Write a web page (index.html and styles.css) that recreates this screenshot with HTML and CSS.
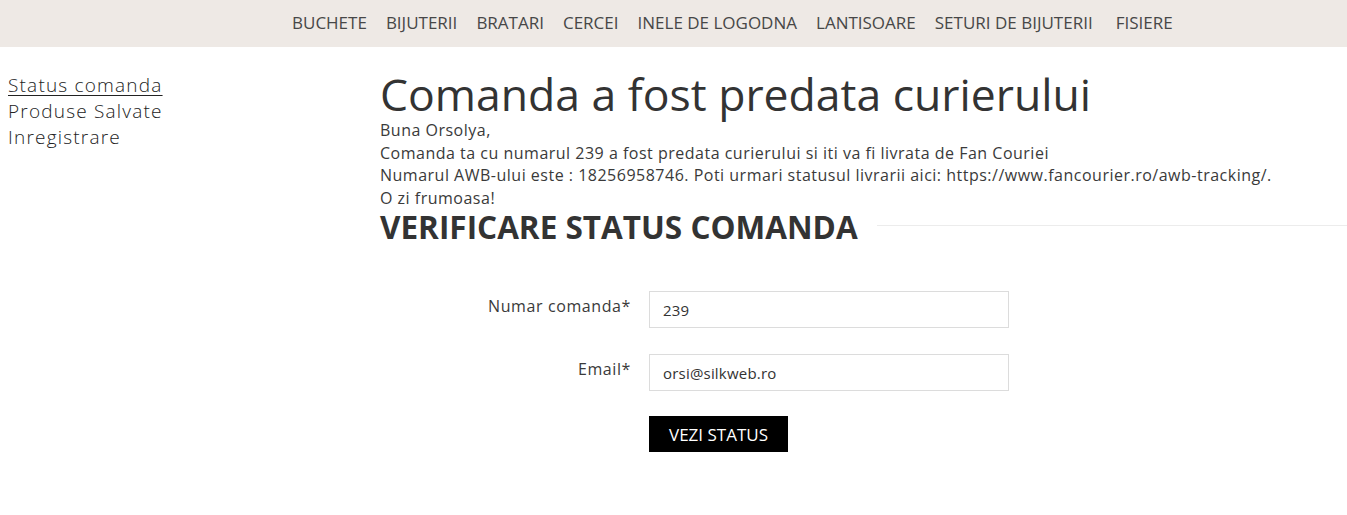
FILE: index.html
```html
<!DOCTYPE html>
<html lang="ro">
<head>
<meta charset="utf-8">
<title>Status comanda</title>
<link rel="stylesheet" href="styles.css">
</head>
<body>
<header class="topbar">
  <nav class="menu">
    <a href="#">BUCHETE</a>
    <a href="#">BIJUTERII</a>
    <a href="#">BRATARI</a>
    <a href="#">CERCEI</a>
    <a href="#">INELE DE LOGODNA</a>
    <a href="#">LANTISOARE</a>
    <a href="#">SETURI DE BIJUTERII</a>
    <a href="#" class="last">FISIERE</a>
  </nav>
</header>
<div class="page">
  <aside class="sidebar">
    <a href="#" class="active">Status comanda</a>
    <a href="#">Produse Salvate</a>
    <a href="#">Inregistrare</a>
  </aside>
  <main class="main">
    <h1 class="title">Comanda a fost predata curierului</h1>
    <div class="message">
      <p>Buna Orsolya,</p>
      <p>Comanda ta cu numarul 239 a fost predata curierului si iti va fi livrata de Fan Couriei</p>
      <p>Numarul AWB-ului este : 18256958746. Poti urmari statusul livrarii aici: https://www.fancourier.ro/awb-tracking/.</p>
      <p>O zi frumoasa!</p>
    </div>
    <div class="section-head">
      <h2>VERIFICARE STATUS COMANDA</h2>
      <span class="rule"></span>
    </div>
    <form class="form">
      <label class="label" for="nr">Numar comanda*</label>
      <input class="field" id="nr" type="text" value="239">
      <label class="label" for="em">Email*</label>
      <input class="field" id="em" type="text" value="orsi@silkweb.ro">
      <span></span>
      <div><button type="button" class="btn">VEZI STATUS</button></div>
    </form>
  </main>
</div>
</body>
</html>
```
FILE: styles.css
```css
* { box-sizing: border-box; }
body {
  margin: 0;
  font-family: "Open Sans", "DejaVu Sans", sans-serif;
  color: #333;
  background: #fff;
}
a { text-decoration: none; color: inherit; }
.topbar {
  background: #eee9e5;
  height: 47px;
}
.menu {
  display: flex;
  align-items: center;
  height: 44px;
  padding-left: 292px;
  gap: 19px;
}
.menu a {
  font-size: 17px;
  color: #474747;
}
.menu .last { margin-left: 4px; }
.page {
  display: grid;
  grid-template-columns: 380px 1fr;
}
.sidebar {
  display: flex;
  flex-direction: column;
  padding: 25px 0 0 8px;
  font-size: 19px;
  font-weight: 300;
  line-height: 26px;
  letter-spacing: 1.2px;
  color: #222;
}
.sidebar .active { text-decoration: underline; text-underline-offset: 3px; text-decoration-thickness: 1px; }
.main { padding-top: 21px; }
.title {
  margin: 0;
  font-size: 44.5px;
  font-weight: 400;
  line-height: 51px;
  color: #333;
}
.message p {
  margin: 0;
  font-size: 16px;
  line-height: 22.6px;
  letter-spacing: 0.5px;
  color: #3a3a3a;
}
.section-head {
  display: flex;
  align-items: center;
  gap: 19px;
  margin-top: 1px;
}
.section-head h2 {
  margin: 0;
  font-size: 31.5px;
  font-weight: 700;
  line-height: 34px;
  color: #333;
  white-space: nowrap;
}
.rule {
  flex: 1;
  border-top: 1px solid #ececec;
  margin-top: -4px;
}
.form {
  display: grid;
  grid-template-columns: 251px 360px;
  column-gap: 18px;
  row-gap: 26px;
  margin-top: 47px;
  align-items: start;
}
.label {
  text-align: right;
  font-size: 16px;
  letter-spacing: 0.6px;
  padding-top: 4px;
  color: #3a3a3a;
}
.field {
  width: 360px;
  height: 37px;
  border: 1px solid #dcdcdc;
  padding: 0 13px;
  font-family: "Open Sans", sans-serif;
  font-size: 15px;
  letter-spacing: 0.2px;
  color: #333;
  outline: none;
}
.btn {
  width: 139px;
  height: 36px;
  background: #000;
  color: #fff;
  border: 0;
  font-family: "Open Sans", sans-serif;
  font-size: 17px;
  font-weight: 500;
  margin-top: -1px;
}
```
